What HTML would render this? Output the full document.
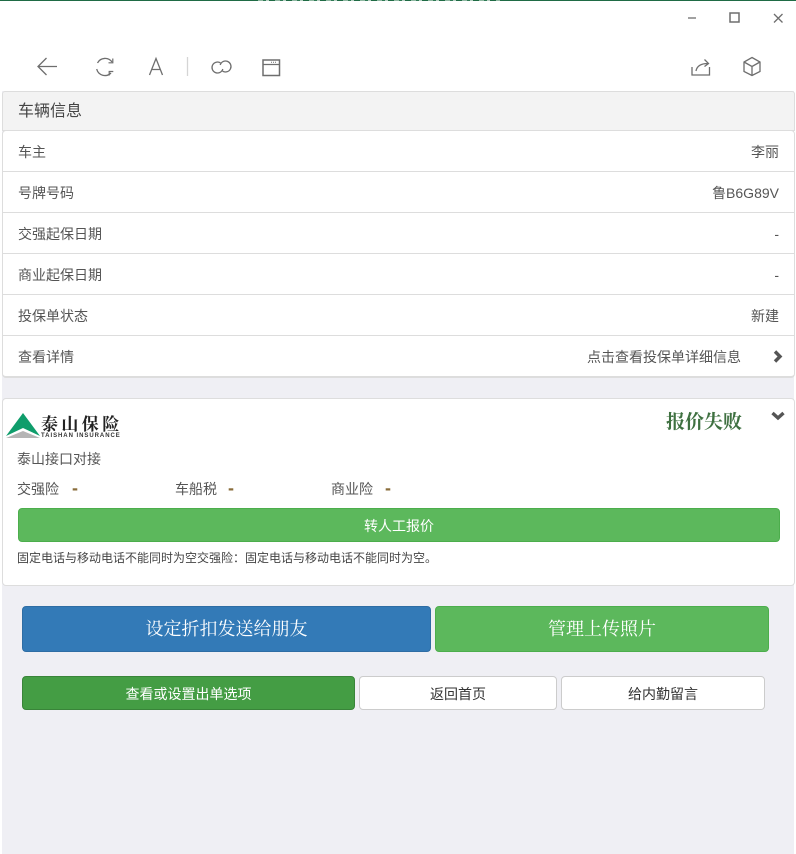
<!DOCTYPE html>
<html lang="zh">
<head>
<meta charset="utf-8">
<style>
html,body{margin:0;padding:0;background:#fff}
body{width:796px;height:854px;position:relative;overflow:hidden;font-family:"Liberation Sans","WenQuanYi Zen Hei","Noto Sans CJK SC",sans-serif;font-size:14px;color:#555}
.a{position:absolute}
.t{position:absolute;white-space:nowrap;line-height:20px;margin-top:1px}
.r{text-align:right}
.line{position:absolute;left:3px;width:791px;height:1px;background:#ddd}
.btn{position:absolute;box-sizing:border-box;border-radius:4px;text-align:center;white-space:nowrap}
.serif{font-family:"Liberation Serif","Noto Serif CJK SC",serif}
.dash{color:#8a6d3b;font-weight:bold;font-size:18px}
svg{position:absolute;overflow:visible}
</style>
</head>
<body>
<div class="a" style="left:0;top:0;width:796px;height:1px;background:#1f6b45"></div>
<div class="a" style="left:258px;top:0;width:242px;height:1px;background:repeating-linear-gradient(90deg,#8fb8a2 0 5px,#2f7a55 5px 8px,#b5d0c2 8px 11px,#1f6b45 11px 17px)"></div>
<div class="a" style="left:2px;top:91px;width:792px;height:763px;background:#efeff4"></div>

<!-- window controls and toolbar -->
<svg style="left:0;top:0" width="796" height="90" fill="none" stroke="#6e6e6e" stroke-width="1.3">
  <path d="M688 18H696"/>
  <rect x="730" y="13" width="9" height="9" stroke-width="1.5"/>
  <path d="M774 14L782.500 22.500M782.500 14L774 22.500"/>
  <!-- back -->
  <path d="M38 66.500H57M46.500 58L38 66.500L46.500 75"/>
  <!-- refresh -->
  <path d="M97.500 63A8.500 8.500 0 0 1 112 62"/>
  <path d="M96.700 69A8.500 8.500 0 0 0 111 73"/>
  <path d="M112.800 58.500V62.800H108.500" stroke-width="1.200"/>
  <path d="M113.300 71.500H109.200V75.500" stroke-width="1.200"/>
  <!-- A -->
  <path d="M149.500 75L156 58.500L162.500 75M151.700 69.500H160.300"/>
  <!-- divider -->
  <path d="M187.500 57V76" stroke="#d5d5d5"/>
  <!-- link -->
  <path d="M220.500 62.900A5.500 5.500 0 1 0 222.800 69"/>
  <path d="M222.500 71.100A5.500 5.500 0 1 0 220.200 65"/>
  <!-- window -->
  <rect x="263" y="60" width="16.500" height="15.500" stroke-width="1.500"/>
  <path d="M263 64.500H279.500"/>
  <path d="M271 62.300H277" stroke-dasharray="1 1" stroke-width="1"/>
  <!-- share -->
  <path d="M692 67V75H709.500V67"/>
  <path d="M696 71C697 65.500 702 63.500 708 63.500M704.500 59.500L708.500 63.500L704.500 66.500"/>
  <!-- cube -->
  <path d="M752 57.500L760 62V71.500L752 75.500L744 71.500V62Z"/>
  <path d="M744 62L752 66.500L760 62M752 66.500V75.500"/>
</svg>

<!-- panel 1 -->
<div class="a" style="left:2px;top:91px;width:791px;height:38px;background:#f3f3f3;border:1px solid #ddd;border-radius:3px 3px 0 0"></div>
<div class="t" style="left:18px;top:101px;font-size:16px;color:#444">车辆信息</div>
<div class="a" style="left:2px;top:130px;width:791px;height:245px;background:#fff;border:1px solid #ddd;border-bottom:2px solid #ddd;border-radius:4px"></div>
<div class="line" style="top:171px"></div>
<div class="line" style="top:212px"></div>
<div class="line" style="top:253px"></div>
<div class="line" style="top:294px"></div>
<div class="line" style="top:335px"></div>

<div class="t" style="left:18px;top:141px">车主</div>
<div class="t" style="left:18px;top:182px">号牌号码</div>
<div class="t" style="left:18px;top:223px">交强起保日期</div>
<div class="t" style="left:18px;top:264px">商业起保日期</div>
<div class="t" style="left:18px;top:305px">投保单状态</div>
<div class="t" style="left:18px;top:346px">查看详情</div>

<div class="t r" style="right:17px;top:141px">李丽</div>
<div class="t r" style="right:17px;top:182px">鲁B6G89V</div>
<div class="t r" style="right:17px;top:223px">-</div>
<div class="t r" style="right:17px;top:264px">-</div>
<div class="t r" style="right:17px;top:305px">新建</div>
<div class="t r" style="right:55px;top:346px">点击查看投保单详细信息</div>

<!-- panel 2 -->
<div class="a" style="left:2px;top:398px;width:791px;height:186px;background:#fff;border:1px solid #ddd;border-radius:4px"></div>
<svg style="left:0;top:0" width="796" height="854" fill="none" stroke="#555" stroke-width="3.4">
  <path d="M775 351.500L780 356.500L775 361.500"/>
  <path d="M772.500 413L778 418L783.500 413"/>
  <path d="M23 413L40 436L23 428L6 436Z" fill="#0f9d6b" stroke="none"/>
  <path d="M6 438L23 431L40 438Z" fill="#b5b5b5" stroke="none"/>
</svg>
<div class="t" style="left:41px;top:412px;font-size:17px;line-height:20px;color:#222;letter-spacing:3.400px;font-family:'Noto Serif CJK SC',serif;font-weight:bold">泰山保险</div>
<div class="t" style="left:41px;top:431px;font-size:6px;line-height:8px;color:#333;font-weight:bold;letter-spacing:.95px">TAISHAN INSURANCE</div>

<div class="t serif" style="left:666px;top:411px;font-size:19px;line-height:22px;font-weight:bold;color:#3e7040">报价失败</div>
<div class="t" style="left:17px;top:448px">泰山接口对接</div>
<div class="t" style="left:17px;top:478px">交强险</div>
<div class="t dash" style="left:72px;top:477px">-</div>
<div class="t" style="left:175px;top:478px">车船税</div>
<div class="t dash" style="left:228px;top:477px">-</div>
<div class="t" style="left:331px;top:478px">商业险</div>
<div class="t dash" style="left:385px;top:477px">-</div>

<div class="btn" style="left:18px;top:508px;width:762px;height:34px;background:#5cb85c;border:1px solid #4cae4c;color:#fff;line-height:34px">转人工报价</div>
<div class="t" style="left:17px;top:547px;font-size:12px;color:#444">固定电话与移动电话不能同时为空交强险：固定电话与移动电话不能同时为空。</div>

<!-- buttons -->
<div class="btn serif" style="left:22px;top:606px;width:409px;height:46px;background:#337ab7;border:1px solid #2e6da4;color:#fff;font-size:18px;line-height:44px">设定折扣发送给朋友</div>
<div class="btn serif" style="left:435px;top:606px;width:334px;height:46px;background:#5cb85c;border:1px solid #4cae4c;color:#fff;font-size:18px;line-height:44px">管理上传照片</div>
<div class="btn" style="left:22px;top:676px;width:333px;height:34px;background:#449d44;border:1px solid #398439;color:#fff;line-height:34px">查看或设置出单选项</div>
<div class="btn" style="left:359px;top:676px;width:198px;height:34px;background:#fff;border:1px solid #ccc;color:#333;line-height:34px">返回首页</div>
<div class="btn" style="left:561px;top:676px;width:204px;height:34px;background:#fff;border:1px solid #ccc;color:#333;line-height:34px">给内勤留言</div>
</body>
</html>
